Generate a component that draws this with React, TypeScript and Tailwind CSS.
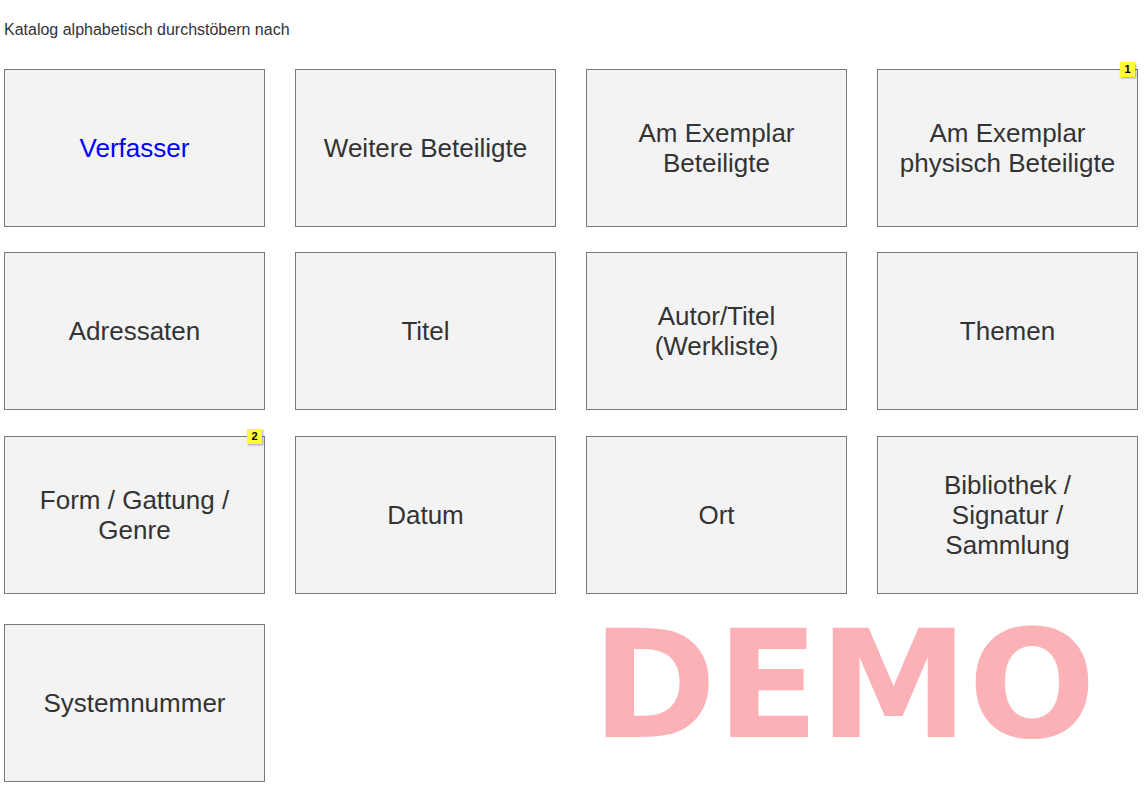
type Entry = {
  label: string[];
  active?: boolean;
  badge?: string;
};

const rows: Entry[][] = [
  [
    { label: ["Verfasser"], active: true },
    { label: ["Weitere Beteiligte"] },
    { label: ["Am Exemplar", "Beteiligte"] },
    { label: ["Am Exemplar", "physisch Beteiligte"], badge: "1" },
  ],
  [
    { label: ["Adressaten"] },
    { label: ["Titel"] },
    { label: ["Autor/Titel", "(Werkliste)"] },
    { label: ["Themen"] },
  ],
  [
    { label: ["Form / Gattung /", "Genre"], badge: "2" },
    { label: ["Datum"] },
    { label: ["Ort"] },
    { label: ["Bibliothek /", "Signatur /", "Sammlung"] },
  ],
  [{ label: ["Systemnummer"] }],
];

const rowMargins = ["mt-[30px]", "mt-[25px]", "mt-[26px]", "mt-[30px]"];

function Card({ entry }: { entry: Entry }) {
  return (
    <a
      href="#"
      className={
        "relative flex h-[158px] w-[261px] flex-col items-center justify-center border border-[#7a7a7a] bg-[#f3f3f3] text-center text-[26px] leading-[30px] " +
        (entry.active ? "text-[#0000ff]" : "text-[#333333]")
      }
    >
      {entry.label.map((line) => (
        <span key={line}>{line}</span>
      ))}
      {entry.badge && (
        <span className="absolute right-[2px] top-[-8px] flex h-[15px] w-[15px] items-center justify-center bg-[#ffff33] text-[11px] font-bold leading-none text-black shadow-[1px_1px_2px_rgba(0,0,0,0.35)]">
          {entry.badge}
        </span>
      )}
    </a>
  );
}

export default function App() {
  return (
    <div
      className="relative min-h-[798px] bg-white pl-[4px] pt-[21px]"
      style={{ fontFamily: '"Liberation Sans", Arial, sans-serif' }}
    >
      <p className="text-[16px] leading-[18px] text-[#333333]">
        Katalog alphabetisch durchstöbern nach
      </p>

      {rows.map((row, i) => (
        <div key={i} className={"flex gap-[30px] " + rowMargins[i]}>
          {row.map((entry) => (
            <Card key={entry.label.join(" ")} entry={entry} />
          ))}
        </div>
      ))}

      <div
        className="pointer-events-none absolute left-[592px] top-[610px] select-none text-[150px] font-bold leading-[150px] text-[#fbb1b5]"
        style={{ fontFamily: '"DejaVu Sans", sans-serif' }}
      >
        DEMO
      </div>
    </div>
  );
}
